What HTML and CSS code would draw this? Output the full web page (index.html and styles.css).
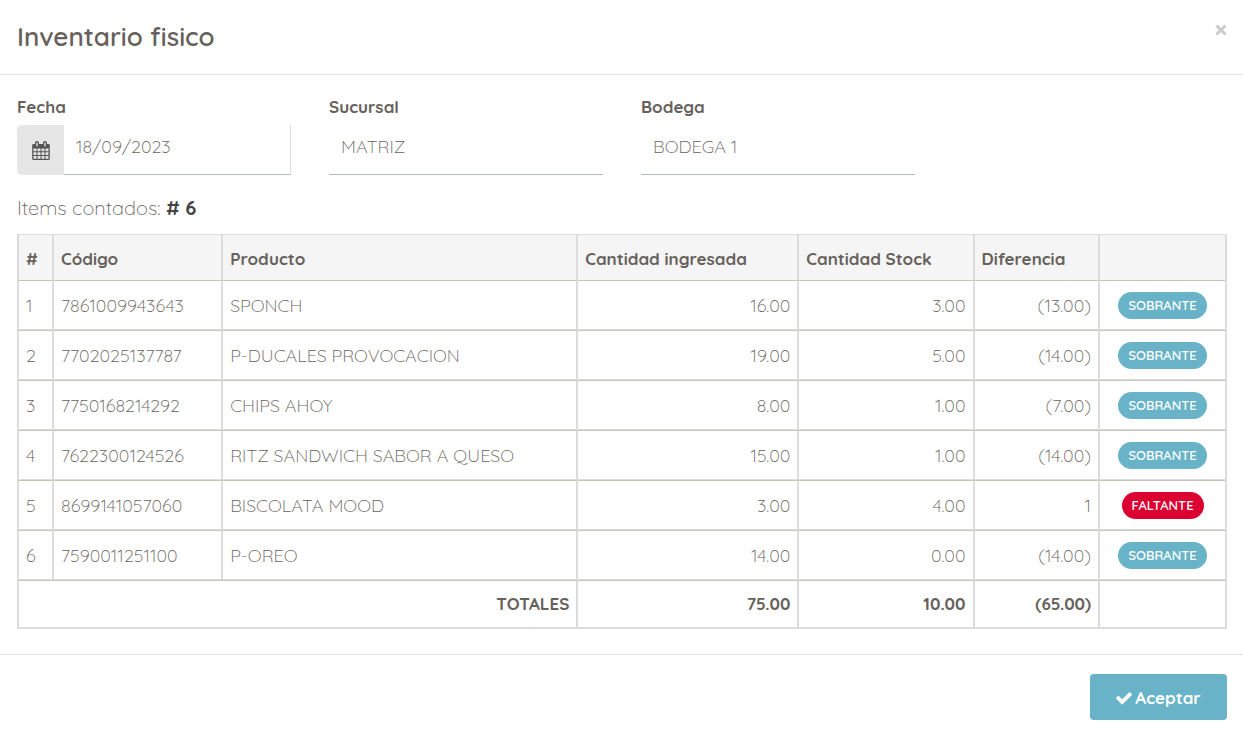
FILE: index.html
```html
<!DOCTYPE html>
<html lang="es">
<head>
<meta charset="utf-8">
<meta name="viewport" content="width=device-width, initial-scale=1">
<title>Inventario fisico</title>
<link rel="stylesheet" href="styles.css">
</head>
<body>
<div class="modal" role="dialog" aria-labelledby="modal-title">
  <header class="modal-header">
    <h1 class="modal-title" id="modal-title">Inventario fisico</h1>
    <button class="close" type="button" aria-label="Cerrar">
      <svg width="12" height="12" viewBox="0 0 12 12" aria-hidden="true"><path d="M1.500 1.500l9 9M10.500 1.500l-9 9" stroke="currentColor" stroke-width="3" fill="none"/></svg>
    </button>
  </header>
  <main class="modal-body">
    <form class="fields">
      <div class="field">
        <label class="field-label" for="fecha">Fecha</label>
        <div class="input-group">
          <span class="addon">
            <svg width="18" height="19" viewBox="0 0 18 19" aria-hidden="true">
              <path fill="currentColor" fill-rule="evenodd" d="M1.5 3H3V2a1.7 1.7 0 0 1 4 0v1h4V2a1.7 1.7 0 0 1 4 0v1h1.500a1.300 1.300 0 0 1 1.300 1.300v13.400a1.300 1.300 0 0 1-1.300 1.300h-15A1.300 1.300 0 0 1 .2 17.700V4.300A1.300 1.300 0 0 1 1.500 3zM4.300 1.800v3.400h1.400V1.800zM12.300 1.800v3.400h1.400V1.800zM1.500 7.500v2.800h3V7.500zM5.500 7.500v2.800H8.500V7.500zM9.500 7.500v2.800h3V7.500zM13.500 7.500v2.800h3V7.500zM1.500 11.300v2.700h3v-2.700zM5.500 11.300v2.700h3v-2.700zM9.500 11.300v2.700h3v-2.700zM13.500 11.300v2.700h3v-2.700zM1.500 15v2.700h3V15zM5.500 15v2.700h3V15zM9.500 15v2.700h3V15zM13.500 15v2.700h3V15z"/>
            </svg>
          </span>
          <input class="control control-date" id="fecha" type="text" value="18/09/2023" readonly>
        </div>
      </div>
      <div class="field">
        <label class="field-label" for="sucursal">Sucursal</label>
        <input class="control" id="sucursal" type="text" value="MATRIZ" readonly>
      </div>
      <div class="field">
        <label class="field-label" for="bodega">Bodega</label>
        <input class="control" id="bodega" type="text" value="BODEGA 1" readonly>
      </div>
    </form>
    <p class="summary">Items contados: <strong># 6</strong></p>
    <table class="items">
      <colgroup>
        <col class="c-num"><col class="c-code"><col class="c-product"><col class="c-entered"><col class="c-stock"><col class="c-diff"><col class="c-status">
      </colgroup>
      <thead>
        <tr><th>#</th><th>Código</th><th>Producto</th><th>Cantidad ingresada</th><th>Cantidad Stock</th><th>Diferencia</th><th></th></tr>
      </thead>
      <tbody>
        <tr><td>1</td><td>7861009943643</td><td>SPONCH</td><td class="num">16.00</td><td class="num">3.00</td><td class="num">(13.00)</td><td class="status"><span class="badge">SOBRANTE</span></td></tr>
        <tr><td>2</td><td>7702025137787</td><td>P-DUCALES PROVOCACION</td><td class="num">19.00</td><td class="num">5.00</td><td class="num">(14.00)</td><td class="status"><span class="badge">SOBRANTE</span></td></tr>
        <tr><td>3</td><td>7750168214292</td><td>CHIPS AHOY</td><td class="num">8.00</td><td class="num">1.00</td><td class="num">(7.00)</td><td class="status"><span class="badge">SOBRANTE</span></td></tr>
        <tr><td>4</td><td>7622300124526</td><td>RITZ SANDWICH SABOR A QUESO</td><td class="num">15.00</td><td class="num">1.00</td><td class="num">(14.00)</td><td class="status"><span class="badge">SOBRANTE</span></td></tr>
        <tr><td>5</td><td>8699141057060</td><td>BISCOLATA MOOD</td><td class="num">3.00</td><td class="num">4.00</td><td class="num">1</td><td class="status"><span class="badge badge-danger">FALTANTE</span></td></tr>
        <tr><td>6</td><td>7590011251100</td><td>P-OREO</td><td class="num">14.00</td><td class="num">0.00</td><td class="num">(14.00)</td><td class="status"><span class="badge">SOBRANTE</span></td></tr>
      </tbody>
      <tfoot>
        <tr><td class="num" colspan="3">TOTALES</td><td class="num">75.00</td><td class="num">10.00</td><td class="num">(65.00)</td><td></td></tr>
      </tfoot>
    </table>
  </main>
  <footer class="modal-footer">
    <button class="accept" type="button">
      <svg width="16" height="13" viewBox="0 0 16 13" aria-hidden="true"><path fill="currentColor" d="M15.700 3.200L6.900 12a1 1 0 0 1-1.400 0L.4 6.900a1 1 0 0 1 0-1.300l1.400-1.400a1 1 0 0 1 1.300 0l3.100 3.100L13 .5a1 1 0 0 1 1.300 0l1.400 1.400a1 1 0 0 1 0 1.300z"/></svg>
      <span>Aceptar</span>
    </button>
  </footer>
</div>
</body>
</html>
```
FILE: styles.css
```css
* {
  box-sizing: border-box;
}

body {
  margin: 0;
  background: #fff;
  color: #66615b;
  font-family: Quicksand, Lato, sans-serif;
  font-size: 18px;
  font-weight: 300;
  line-height: 26px;
}

button,
input {
  font: inherit;
  color: inherit;
}

.modal-header {
  display: flex;
  justify-content: space-between;
  align-items: flex-start;
  padding: 20px 16px 20px 17px;
  border-bottom: 1px solid #e5e5e5;
}

.modal-title {
  margin: 0;
  font-size: 26px;
  font-weight: 600;
  line-height: 34px;
}

.close {
  display: flex;
  margin: 0;
  padding: 4px 0;
  border: 0;
  background: none;
  color: #ccc;
}

.modal-body {
  padding: 19px 16px 25px 17px;
}

.fields {
  display: grid;
  grid-template-columns: repeat(4, 1fr);
  gap: 38px;
}

.field-label {
  display: block;
  margin-bottom: 5px;
  font-size: 17px;
  font-weight: 700;
}

.input-group {
  display: flex;
}

.addon {
  display: flex;
  flex: none;
  align-items: center;
  justify-content: center;
  width: 47px;
  border-radius: 5px 0 0 5px;
  background: #e6e6e6;
  color: #555;
}

.control {
  display: block;
  width: 100%;
  min-width: 0;
  height: 50px;
  padding: 0 12px 6px;
  border: 0;
  border-bottom: 1px solid #b5bbc4;
  border-radius: 0;
  background: #fff;
}

.control-date {
  border-right: 1px solid #ddd;
}

.summary {
  margin: 20px 0 13px;
  font-size: 20px;
}

.summary strong {
  color: #444;
  font-weight: 700;
}

.items {
  width: 100%;
  table-layout: fixed;
  border: 1px solid #dcdcdc;
  border-collapse: separate;
  border-spacing: 0;
}

.c-num { width: 2.9%; }
.c-code { width: 14%; }
.c-product { width: 29.4%; }
.c-entered { width: 18.3%; }
.c-stock { width: 14.5%; }
.c-diff { width: 10.4%; }
.c-status { width: 10.5%; }

.items th,
.items td {
  padding: 0 7px;
  border: 1px solid #dcdcdc;
}

.items th {
  height: 45px;
  padding-top: 2px;
  border-top: 0;
  border-bottom: 0;
  background: #f5f5f5;
  font-size: 17px;
  font-weight: 700;
  text-align: left;
}

.items td {
  height: 50px;
  padding-top: 2px;
  border-top-color: #c6c5ba;
}

.items tfoot td {
  height: 48px;
  padding-top: 0;
  font-size: 17px;
  font-weight: 700;
}

.items .num {
  text-align: right;
}

.items .status {
  padding-top: 0;
  text-align: center;
}

.badge {
  display: inline-block;
  padding: 0 10px;
  border-radius: 14px;
  background: #68b3c8;
  color: #fff;
  font-size: 13px;
  font-weight: 600;
  line-height: 27px;
  vertical-align: middle;
}

.badge-danger {
  background: #dc0030;
}

.modal-footer {
  display: flex;
  justify-content: flex-end;
  padding: 19px 16px;
  border-top: 1px solid #e5e5e5;
}

.accept {
  display: flex;
  align-items: center;
  justify-content: center;
  gap: 3px;
  min-width: 137px;
  padding: 11px 24px 9px;
  border: 0;
  border-radius: 4px;
  background: #68b3c8;
  color: #fff;
  font-size: 17px;
  font-weight: 700;
}
```
